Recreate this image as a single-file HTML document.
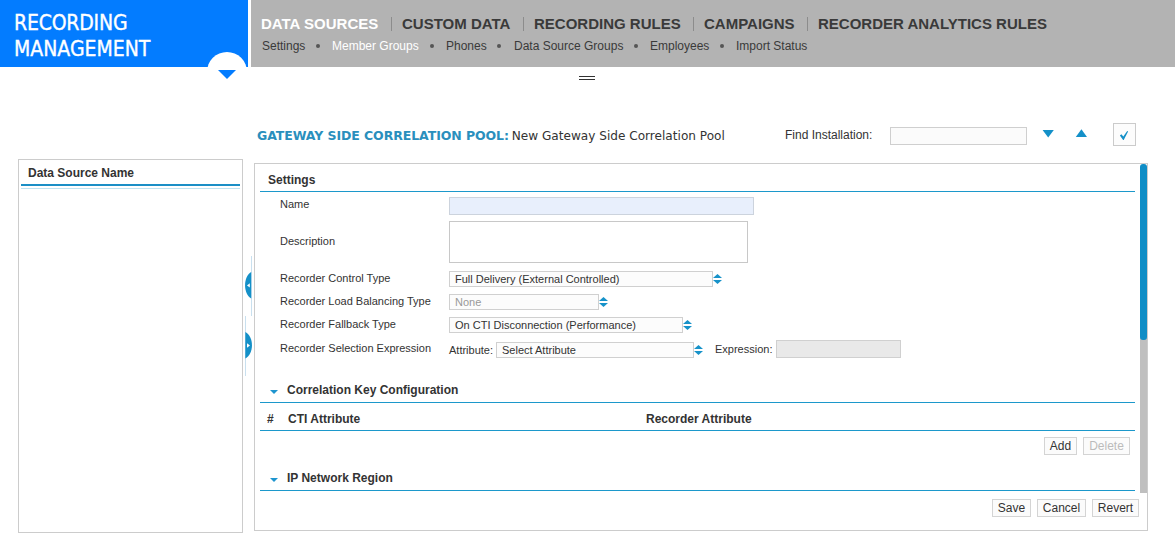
<!DOCTYPE html>
<html><head><meta charset="utf-8">
<style>
*{box-sizing:border-box;margin:0;padding:0}
html,body{width:1175px;height:539px;overflow:hidden;background:#fff;font-family:"Liberation Sans",sans-serif;color:#333}
.abs{position:absolute}
#blue{left:0;top:0;width:248px;height:67px;background:#037cff}
#blue .t{position:absolute;left:14px;color:#fff;font-family:"DejaVu Sans Condensed","Liberation Sans",sans-serif;font-size:21px;line-height:26px;white-space:nowrap;-webkit-text-stroke:0.35px #fff}
#gray{left:251px;top:0;width:924px;height:67px;background:#b3b3b3}
#circle{left:207px;top:52px;width:40px;height:40px;border-radius:50%;background:#fff}
#tri{left:218px;top:70px;width:0;height:0;border-left:9px solid transparent;border-right:9px solid transparent;border-top:9px solid #037cff}
#whitebelow{left:0;top:67px;width:1175px;height:30px;background:#fff}
.nav1{position:absolute;top:14px;font-weight:bold;font-size:15px;line-height:20px;color:#3a3a3a;white-space:nowrap}
.nav1.sel{color:#fff}
.sep{position:absolute;top:17px;width:1px;height:14px;background:#8c8c8c}
.nav2{position:absolute;top:39px;font-size:12px;line-height:15px;color:#3a3a3a;white-space:nowrap}
.nav2.sel{color:#fff}
.dot{position:absolute;top:44px;width:4px;height:4px;border-radius:50%;background:#555}
.handle{position:absolute;left:579px;width:16px;height:1px;background:#333}
#ttl{left:257px;top:128px;font-size:12.1px;line-height:16px;white-space:nowrap;font-family:"DejaVu Sans","Liberation Sans",sans-serif}
#ttl b{color:#2a8fbd;letter-spacing:-0.08px;font-size:12.5px}
.lbl{position:absolute;font-size:11px;line-height:14px;color:#333;white-space:nowrap}
.box{position:absolute;border:1px solid #ccc;background:#fff}
.sel{ }
.selbox{position:absolute;border:1px solid #d0d0d0;background:#fcfcfc;height:16px;font-size:11px;line-height:14px;padding-left:5px;color:#333;white-space:nowrap}
.hline{position:absolute;height:1px;background:#1c98cb}
.sech{position:absolute;font-weight:bold;font-size:12px;line-height:15px;color:#333;white-space:nowrap}
.btn{position:absolute;border:1px solid #d4d4d4;background:#fbfbfb;font-size:12px;line-height:17px;height:18px;text-align:center;color:#333}
.arr{position:absolute;width:9px;height:10px}
.caret{position:absolute;width:0;height:0;border-left:4.5px solid transparent;border-right:4.5px solid transparent;border-top:4.5px solid #1e95cf}
</style></head><body>
<div id="blue" class="abs"><div class="t" style="top:10px;letter-spacing:-0.2px">RECORDING</div><div class="t" style="top:36px">MANAGEMENT</div></div>
<div id="gray" class="abs"></div>
<div id="circle" class="abs"></div>
<div id="tri" class="abs"></div>

<div class="nav1 sel" style="left:261px">DATA SOURCES</div>
<div class="sep" style="left:391px"></div>
<div class="nav1" style="left:402px">CUSTOM DATA</div>
<div class="sep" style="left:523px"></div>
<div class="nav1" style="left:534px">RECORDING RULES</div>
<div class="sep" style="left:693px"></div>
<div class="nav1" style="left:704px">CAMPAIGNS</div>
<div class="sep" style="left:807px"></div>
<div class="nav1" style="left:818px">RECORDER ANALYTICS RULES</div>

<div class="nav2" style="left:262px">Settings</div>
<div class="dot" style="left:316px"></div>
<div class="nav2 sel" style="left:332px">Member Groups</div>
<div class="dot" style="left:430px"></div>
<div class="nav2" style="left:446px">Phones</div>
<div class="dot" style="left:497px"></div>
<div class="nav2" style="left:514px">Data Source Groups</div>
<div class="dot" style="left:634px"></div>
<div class="nav2" style="left:650px">Employees</div>
<div class="dot" style="left:720px"></div>
<div class="nav2" style="left:736px">Import Status</div>

<div class="handle" style="top:76px"></div>
<div class="handle" style="top:79px"></div>

<div id="ttl" class="abs"><b>GATEWAY SIDE CORRELATION POOL:</b><span style="margin-left:-1px"> New Gateway Side Correlation Pool</span></div>
<div class="lbl" style="left:785px;top:128px;font-size:12px">Find Installation:</div>
<div class="box" style="left:890px;top:127px;width:137px;height:18px;border-color:#cfcfcf;background:#fbfbfb"></div>
<svg class="abs" style="left:1040px;top:126px" width="16" height="16" viewBox="0 0 16 16"><path d="M2.6 3.9 L13.8 3.9 L8.2 11.6Z" fill="#1490c8"/></svg>
<svg class="abs" style="left:1073px;top:126px" width="16" height="16" viewBox="0 0 16 16"><path d="M2.8 10.9 L14 10.9 L8.4 3.3Z" fill="#1490c8"/></svg>
<div class="box" style="left:1113px;top:123px;width:23px;height:23px;border-color:#cbcbcb;background:#fcfcfc"></div>
<svg class="abs" style="left:1118px;top:129px" width="12" height="13" viewBox="0 0 12 13"><path d="M1.9 6.4 L3.4 5.3 L5.3 7.6 L9.2 2 L10.1 2.5 L5.7 11.1 L5.1 11.1Z" fill="#1490c8"/></svg>

<!-- left panel -->
<div class="box" style="left:18px;top:159px;width:225px;height:374px"></div>
<div class="sech" style="left:28px;top:166px">Data Source Name</div>
<div class="abs" style="left:21px;top:184px;width:219px;height:2px;background:#1b8fc6"></div>
<div class="abs" style="left:21px;top:188px;width:219px;height:1px;background:#bfe3f2"></div>

<!-- splitter -->
<svg class="abs" style="left:240px;top:250px" width="16" height="132" viewBox="0 0 16 132">
<rect x="11" y="6" width="1" height="60" fill="#c9e0ef"/>
<rect x="5" y="66" width="1" height="60" fill="#c9e0ef"/>
<path d="M11.2 22 C3 27,3 43.5,11.2 48.5Z" fill="#1490c8"/>
<path d="M5.3 82 C14.2 87,14.2 103.5,5.3 108.5Z" fill="#1490c8"/>
<path d="M9.8 33.2 L9.8 37.6 L7 35.4Z" fill="#fff"/>
<path d="M7 93.2 L7 97.8 L10 95.5Z" fill="#fff"/>
</svg>
<!-- main panel -->
<div class="box" style="left:254px;top:163px;width:894px;height:368px"></div>
<div class="sech" style="left:268px;top:173px">Settings</div>
<div class="hline" style="left:260px;top:191px;width:875px"></div>

<div class="lbl" style="left:280px;top:197px">Name</div>
<div class="lbl" style="left:280px;top:234px">Description</div>
<div class="lbl" style="left:280px;top:271px">Recorder Control Type</div>
<div class="lbl" style="left:280px;top:294px">Recorder Load Balancing Type</div>
<div class="lbl" style="left:280px;top:317px">Recorder Fallback Type</div>
<div class="lbl" style="left:280px;top:341px">Recorder Selection Expression</div>

<div class="box" style="left:449px;top:197px;width:305px;height:18px;background:#e8effc;border-color:#ccd3dd"></div>
<div class="box" style="left:449px;top:221px;width:299px;height:42px;border-color:#c8c8c8"></div>
<div class="selbox" style="left:449px;top:271px;width:264px">Full Delivery (External Controlled)</div>
<div class="selbox" style="left:449px;top:294px;width:150px;color:#999">None</div>
<div class="selbox" style="left:449px;top:317px;width:234px">On CTI Disconnection (Performance)</div>
<div class="lbl" style="left:449px;top:343px">Attribute:</div>
<div class="selbox" style="left:496px;top:342px;width:198px;height:16px">Select Attribute</div>
<div class="lbl" style="left:715px;top:342px">Expression:</div>
<div class="box" style="left:776px;top:340px;width:125px;height:18px;background:#e9e9e9;border-color:#d0d0d0"></div>

<svg class="arr" style="left:713px;top:274px" viewBox="0 0 9 10"><path d="M0 4.1 L4.5 0 L9 4.1Z M0 5.9 L4.5 10 L9 5.9Z" fill="#1792c9"/></svg>
<svg class="arr" style="left:599px;top:297px" viewBox="0 0 9 10"><path d="M0 4.1 L4.5 0 L9 4.1Z M0 5.9 L4.5 10 L9 5.9Z" fill="#1792c9"/></svg>
<svg class="arr" style="left:683px;top:320px" viewBox="0 0 9 10"><path d="M0 4.1 L4.5 0 L9 4.1Z M0 5.9 L4.5 10 L9 5.9Z" fill="#1792c9"/></svg>
<svg class="arr" style="left:694px;top:345px" viewBox="0 0 9 10"><path d="M0 4.1 L4.5 0 L9 4.1Z M0 5.9 L4.5 10 L9 5.9Z" fill="#1792c9"/></svg>

<div class="caret" style="left:270px;top:390px"></div>
<div class="sech" style="left:287px;top:383px">Correlation Key Configuration</div>
<div class="hline" style="left:260px;top:402px;width:875px"></div>
<div class="sech" style="left:267px;top:412px">#</div>
<div class="sech" style="left:288px;top:412px">CTI Attribute</div>
<div class="sech" style="left:646px;top:412px">Recorder Attribute</div>
<div class="hline" style="left:260px;top:430px;width:875px"></div>
<div class="btn" style="left:1044px;top:437px;width:33px">Add</div>
<div class="btn" style="left:1083px;top:437px;width:47px;color:#bbb">Delete</div>

<div class="caret" style="left:270px;top:478px"></div>
<div class="sech" style="left:287px;top:471px">IP Network Region</div>
<div class="hline" style="left:260px;top:490px;width:875px"></div>

<div class="btn" style="left:992px;top:499px;width:39px">Save</div>
<div class="btn" style="left:1037px;top:499px;width:49px">Cancel</div>
<div class="btn" style="left:1092px;top:499px;width:47px">Revert</div>

<!-- scrollbar -->
<div class="abs" style="left:1140px;top:338px;width:7px;height:155px;background:#bfbfbf"></div>
<div class="abs" style="left:1140px;top:164px;width:7px;height:176px;background:#0f8dc6;border-radius:3px"></div>
</body></html>
